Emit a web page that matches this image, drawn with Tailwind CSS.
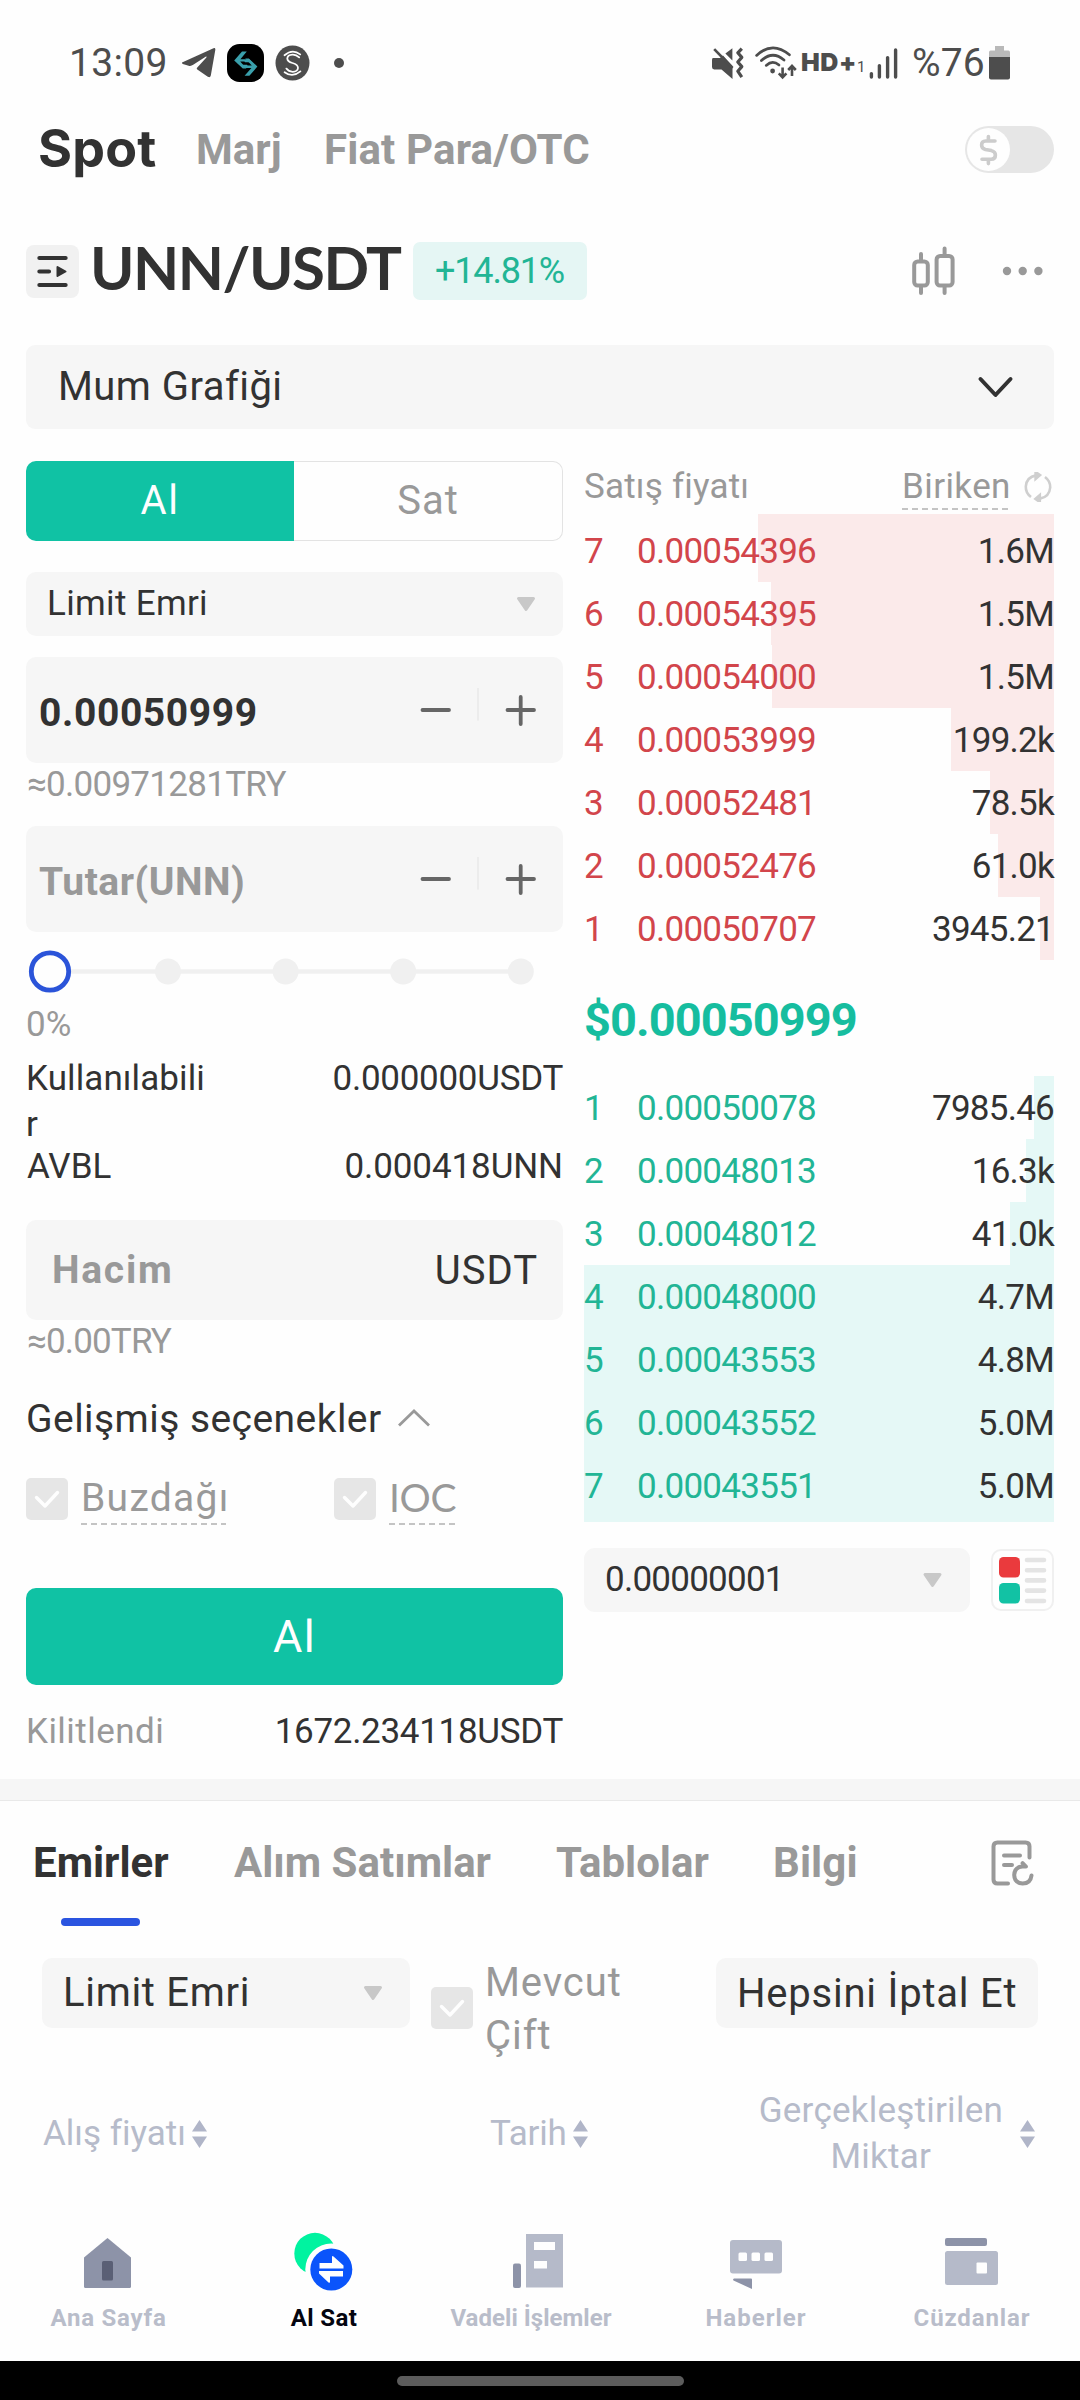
<!DOCTYPE html>
<html lang="tr">
<head>
<meta charset="utf-8">
<title>UNN/USDT Spot</title>
<script src="https://cdn.jsdelivr.net/npm/@tailwindcss/browser@4"></script>
</head>
<body class="w-[1080px] h-[2400px] overflow-hidden flex flex-col bg-[#fefefe] text-[#323232] [font-family:Roboto,sans-serif] whitespace-nowrap">

<!-- Status bar -->
<header class="h-[126px] shrink-0 flex items-center justify-between pl-[69px] pr-[70px] text-[#4d4d4d]">
  <div class="flex items-center">
    <span class="text-[39px] tracking-[0.340px] w-[113px]">13:09</span>
    <svg class="w-[34px] h-[32px]" viewBox="0 0 34 32" fill="#4d4d4d"><path d="M0 15.5 L31.5 1.2 Q33.6 .6 33.3 3 L28.8 28.6 Q28.2 31.2 25.8 29.8 L15.3 22.6 Q14.2 21.6 15.3 20.4 L24.4 10.4 Q25 9.2 23.6 9.8 L11.2 17.8 Q9 19.4 6.6 18.7 L.8 16.9 Q-.6 16.2 0 15.5Z"/></svg>
    <svg class="ml-[11px] w-[37px] h-[38px]" viewBox="0 0 37 38"><rect width="37" height="38" rx="12.5" fill="#000"/><g fill="#3aa0ac"><path d="M15 7.5h4.8L13.4 15.2h8.8l2.6 3H18l-.6-.6H13.2L19.4 24.6H15.8L7.2 16.6Z"/><path d="M22.4 31.8h-4.8L24.4 24h-8.6l-2.8-3.2h7l.6.6h4.2L18.2 14.4h3.6L30.4 22.6Z"/></g></svg>
    <svg class="ml-[11px] w-[35px] h-[36px]" viewBox="0 0 35 36"><ellipse cx="17.5" cy="18" rx="17" ry="17.6" fill="#4d4d4d"/><g fill="none" stroke="#fefefe" stroke-width="1.8" stroke-linecap="round"><path d="M9.5 10.2Q17.5 3.4 25.2 9.4"/><path d="M24.2 12.4Q21 9.4 17.5 9.6Q12.5 9.8 12.3 13.4Q12.3 16.4 17.5 18Q23 19.4 23 23Q22.6 26.6 17.7 26.8Q13.6 26.8 11.4 23.6"/><path d="M25.4 26.4Q17.5 33 9.6 27.2"/></g></svg>
    <span class="ml-[24px] size-[10px] rounded-full bg-[#4d4d4d]"></span>
  </div>
  <div class="flex items-center">
    <svg class="w-[32px] h-[34px]" viewBox="0 0 32 34"><path d="M1 12h7l3-2.4L20.5 20v13L9.5 23.4H2.2Q0 23.4 0 21V14Q0 12 1 12Z" fill="#4d4d4d"/><path d="M13.4 7.6 20.4 2.2V14.6Z" fill="#4d4d4d"/><path d="M2.2 3.2 20.6 22" stroke="#4d4d4d" stroke-width="2.6"/><path d="M29.8 2.6 25.8 6.8 29.8 11.4 25.8 16 29.8 20.6 25.8 25.2 29.8 31.2" fill="none" stroke="#4d4d4d" stroke-width="3.2" stroke-linejoin="round"/></svg>
    <svg class="ml-[11px] w-[42px] h-[34px]" viewBox="0 0 42 34"><g fill="none" stroke="#4d4d4d" stroke-width="2.7" stroke-linecap="round"><path d="M1.6 9.4Q17.4-5.4 34.4 8.8"/><path d="M6.4 14.6Q17.6 4.2 29 14"/><path d="M11.2 19.4Q17.6 13.6 24 19"/></g><circle cx="17.6" cy="25" r="2.4" fill="#4d4d4d"/><g stroke="#4d4d4d" stroke-width="2.6" fill="none"><path d="M27.6 21.4V31M23.8 27.4l3.8 4 3.8-4"/><path d="M37 30V20M33.2 24l3.8-4 3.8 4"/></g></svg>
    <span class="ml-[4px] text-[25px] font-black tracking-[0.6px] w-[56px] [font-family:Inter,sans-serif]">HD+</span>
    <span class="text-[15px] leading-none mt-[8px] w-[12px]">1</span>
    <svg class="w-[29px] h-[31px]" viewBox="0 0 29 31" stroke="#4d4d4d" stroke-width="3.4" stroke-linecap="round"><path d="M2.4 25.6V29M10.4 17.6V29M18.6 9.6V29M26.6 2V29"/></svg>
    <span class="ml-[14px] text-[39px] tracking-[0.120px] w-[77px]">%76</span>
    <svg class="w-[21px] h-[34px]" viewBox="0 0 21 34"><path d="M6 0h9v4.6h4.400Q21 4.600 21 6.400V12H0V6.400Q0 4.600 1.600 4.600H6Z" fill="#b9b9b9"/><path d="M0 11h21v20.400q0 2-2 2H2q-2 0-2-2Z" fill="#4d4d4d"/></svg>
  </div>
</header>

<!-- Market tabs -->
<nav class="h-[47px] shrink-0 flex items-center pl-[38px] pr-[26px] font-bold text-[42px] text-[#999]">
  <span class="text-[52px] tracking-[0.200px] text-[#323232] w-[158px] pb-[2px] [font-family:Inter,sans-serif]">Spot</span>
  <span class="tracking-[0.040px] w-[128px]">Marj</span>
  <span class="tracking-[0.150px]">Fiat Para/OTC</span>
  <div class="ml-auto w-[89px] h-[47px] rounded-full bg-[#e6e6e6] p-[2px] flex items-center">
    <span class="size-[43px] rounded-full bg-[#fefefe] flex items-center justify-center">
      <svg class="w-[19px] h-[32px]" viewBox="0 0 19 32" fill="none" stroke="#ccc" stroke-width="3.6" stroke-linecap="round" stroke-linejoin="round"><path d="M16 7H6.6Q2.6 7 2.6 11Q2.6 14.4 6.4 15.4L12.4 16.6Q16.4 17.8 16.4 21Q16.4 25.2 12.2 25.2H3M9.4 2.6V6M9.4 26V29.6"/></svg>
    </span>
  </div>
</nav>

<!-- Pair header -->
<section class="mt-[69px] h-[58px] shrink-0 flex items-center pl-[26px]">
  <span class="w-[53px] h-[53px] rounded-[8px] bg-[#f1f1f1] flex items-center justify-center">
    <svg class="w-[31px] h-[33px]" viewBox="0 0 31 33" stroke="#323232" stroke-width="4.2" stroke-linecap="round"><path d="M2.4 3H28.6M2.4 30H28.6M2.4 16.5H12"/><path d="M20.5 12 28.5 16.5 20.5 21Z" fill="#323232" stroke-width="2" stroke-linejoin="round"/></svg>
  </span>
  <h1 class="ml-[11px] w-[323px] text-[60px] leading-[58px] font-bold tracking-[-1.5px] pb-[8px] [font-family:Lato,sans-serif]">UNN/USDT</h1>
  <span class="w-[174px] h-[58px] rounded-[7px] bg-[#e5f6f4] text-[#22b595] pl-[22px] text-[36px] leading-[58px] tracking-[-1.170px]">+14.81%</span>
  <svg class="ml-[325px] w-[43px] h-[50px]" viewBox="0 0 43 50" fill="none" stroke="#999" stroke-width="4" stroke-linecap="round"><rect x="2.2" y="15.5" width="13.6" height="24" rx="3.5"/><path d="M9 8V14M9 41V47"/><rect x="24.6" y="10" width="16" height="29.500" rx="3.500"/><path d="M32.600 2.500V8M32.600 41V47"/></svg>
  <svg class="ml-[47px] w-[42px] h-[10px]" viewBox="0 0 42 10" fill="#999"><circle cx="5" cy="5" r="4.2"/><circle cx="20.700" cy="5" r="4.2"/><circle cx="36.400" cy="5" r="4.2"/></svg>
</section>

<!-- Chart toggle -->
<section class="mt-[45px] mx-[26px] h-[84px] shrink-0 rounded-[9px] bg-[#f6f6f6] flex items-center justify-between pl-[32px] pr-[40px]">
  <span class="text-[40px] tracking-[0.450px]">Mum Grafiği</span>
  <svg class="w-[37px] h-[24px]" viewBox="0 0 37 24" fill="none" stroke="#323232" stroke-width="4" stroke-linecap="round" stroke-linejoin="round"><path d="M3.500 4 18.500 20 33.500 4"/></svg>
</section>

<main class="mt-[32px] h-[1318px] shrink-0 flex pl-[26px] pr-[26px]">
  <!-- Order form -->
  <section class="w-[537px] shrink-0 flex flex-col">
    <div class="h-[80px] shrink-0 flex text-[40px] leading-[80px] text-center">
      <span class="w-[268px] rounded-l-[10px] bg-[#10c2a4] text-[#fefefe] tracking-[1.600px]">Al</span>
      <span class="flex-1 rounded-r-[10px] border border-l-0 border-[#e3e3e3] text-[#999] tracking-[0.930px] leading-[78px]">Sat</span>
    </div>

    <div class="mt-[31px] h-[64px] shrink-0 rounded-[10px] bg-[#f6f6f6] flex items-center justify-between pl-[21px] pr-[27px]">
      <span class="text-[35px] tracking-[0.330px]">Limit Emri</span>
      <svg class="w-[20px] h-[16px]" viewBox="0 0 20 16"><path d="M2.500 2.500h15L10 13.500Z" fill="#c8c8c8" stroke="#c8c8c8" stroke-width="3" stroke-linejoin="round"/></svg>
    </div>

    <div class="mt-[21px] h-[106px] shrink-0 rounded-[10px] bg-[#f6f6f6] flex items-center pl-[13px] pr-[27px]">
      <span class="text-[39px] font-bold tracking-[0.610px] pt-[6px]">0.00050999</span>
      <svg class="ml-auto w-[116px] h-[44px]" viewBox="0 0 116 44" stroke="#666" stroke-width="3.8" stroke-linecap="round"><path d="M2.500 22H29M87.500 22H114M100.700 9V36"/><path d="M58 -10V32" stroke="#e9e9e9" stroke-width="1.500"/></svg>
    </div>
    <div class="h-[40px] shrink-0 pl-[1px] text-[35px] leading-[43px] tracking-[-0.710px] text-[#999]">≈0.00971281TRY</div>

    <div class="mt-[23px] h-[106px] shrink-0 rounded-[10px] bg-[#f6f6f6] flex items-center pl-[13px] pr-[27px]">
      <span class="text-[39px] font-bold tracking-[0.520px] pt-[6px] text-[#999]">Tutar(UNN)</span>
      <svg class="ml-auto w-[116px] h-[44px]" viewBox="0 0 116 44" stroke="#666" stroke-width="3.8" stroke-linecap="round"><path d="M2.500 22H29M87.500 22H114M100.700 9V36"/><path d="M58 -10V32" stroke="#e9e9e9" stroke-width="1.500"/></svg>
    </div>

    <div class="h-[71px] shrink-0 pt-[17px] pl-[2px]">
      <svg class="w-[510px] h-[46px]" viewBox="0 0 510 46"><path d="M40 22.500H492" stroke="#f0f0f0" stroke-width="4.500"/><g fill="#f0f0f0"><circle cx="140" cy="22.500" r="13"/><circle cx="257.600" cy="22.500" r="13"/><circle cx="375.200" cy="22.500" r="13"/><circle cx="492.800" cy="22.500" r="13"/></g><circle cx="22" cy="22.500" r="18.700" fill="#fefefe" stroke="#2b54d9" stroke-width="4.800"/></svg>
    </div>
    <div class="h-[40px] shrink-0 text-[35px] leading-[43px] text-[#999]">0%</div>

    <div class="mt-[13px] shrink-0 flex justify-between text-[35px] leading-[46px]">
      <span class="h-[92px] w-[190px] tracking-[0.100px]">Kullanılabili<br>r</span>
      <span class="tracking-[-0.280px]">0.000000USDT</span>
    </div>
    <div class="h-[36px] shrink-0 flex justify-between text-[35px] leading-[38px]">
      <span class="pl-[1px]">AVBL</span>
      <span class="tracking-[-0.100px]">0.000418UNN</span>
    </div>

    <div class="mt-[36px] h-[100px] shrink-0 rounded-[10px] bg-[#f6f6f6] flex items-center justify-between pl-[26px] pr-[25px] pt-[1px]">
      <span class="text-[39px] font-bold tracking-[1.730px] text-[#999]">Hacim</span>
      <span class="text-[40px] tracking-[0.990px]">USDT</span>
    </div>
    <div class="h-[40px] shrink-0 pl-[1px] text-[35px] leading-[43px] tracking-[-0.820px] text-[#999]">≈0.00TRY</div>

    <div class="mt-[34px] h-[48px] shrink-0 flex items-center">
      <span class="text-[39px] leading-[46px] tracking-[0.450px] pt-[1px]">Gelişmiş seçenekler</span>
      <svg class="ml-[15px] w-[34px] h-[20px]" viewBox="0 0 34 20" fill="none" stroke="#999" stroke-width="2.800"><path d="M2 17.500 17 3 32 17.500"/></svg>
    </div>

    <div class="mt-[36px] h-[48px] shrink-0 flex text-[39px] leading-[41px] text-[#999]">
      <span class="size-[42px] rounded-[5px] bg-[#e6e6e6] flex items-center justify-center"><svg class="w-[26px] h-[19px]" viewBox="0 0 26 19" fill="none" stroke="#fefefe" stroke-width="3.400" stroke-linecap="round" stroke-linejoin="round"><path d="M2.500 7.500 11 16 23.500 2.500"/></svg></span>
      <div class="ml-[13px] w-[145px]"><div class="h-[45px] tracking-[1.300px]">Buzdağı</div><div class="h-[2px] bg-[repeating-linear-gradient(90deg,#c4c4c4_0_6px,transparent_6px_10px)]"></div></div>
      <span class="ml-[108px] size-[42px] rounded-[5px] bg-[#e6e6e6] flex items-center justify-center"><svg class="w-[26px] h-[19px]" viewBox="0 0 26 19" fill="none" stroke="#fefefe" stroke-width="3.400" stroke-linecap="round" stroke-linejoin="round"><path d="M2.500 7.500 11 16 23.500 2.500"/></svg></span>
      <div class="ml-[13px] w-[66px]"><div class="h-[45px] leading-[39px] tracking-[-0.340px] [font-family:Lato,sans-serif]">IOC</div><div class="h-[2px] bg-[repeating-linear-gradient(90deg,#c4c4c4_0_6px,transparent_6px_10px)]"></div></div>
    </div>

    <button class="mt-[62px] h-[97px] shrink-0 rounded-[10px] bg-[#10c2a4] text-[#fefefe] text-[45px] leading-[97px] tracking-[1.400px]">Al</button>
    <div class="mt-[26px] h-[40px] shrink-0 flex justify-between text-[35px] leading-[42px]">
      <span class="tracking-[0.450px] text-[#999]">Kilitlendi</span>
      <span class="tracking-[-0.300px]">1672.234118USDT</span>
    </div>
  </section>

  <!-- Order book -->
  <section class="ml-[21px] w-[470px] shrink-0 flex flex-col">
    <div class="h-[53px] shrink-0 flex text-[35px] leading-[51px] text-[#999]">
      <span class="tracking-[0.200px]">Satış fiyatı</span>
      <div class="ml-auto w-[106px]"><div class="h-[47px] tracking-[0.410px]">Biriken</div><div class="h-[2px] bg-[repeating-linear-gradient(90deg,#c4c4c4_0_6px,transparent_6px_10px)]"></div></div>
      <svg class="ml-[16px] mr-[2px] mt-[11px] w-[28px] h-[30px]" viewBox="0 0 28 30" fill="none" stroke="#cfcfcf" stroke-width="2.600"><path d="M7 25Q1.600 21 1.800 14.500Q2.600 5 12 3.400"/><path d="M11.600 0 16 3.200 11.600 7Z" fill="#cfcfcf"/><path d="M21 5Q26.400 9 26.200 15.500Q25.400 25 16 26.600"/><path d="M15.800 30 11.400 26.800 15.800 23Z" fill="#cfcfcf"/></svg>
    </div>
    <div id="asks" class="shrink-0 text-[#d2454b]"></div>
    <div class="h-[116px] shrink-0 text-[47px] leading-[120px] font-bold tracking-[-0.950px] text-[#16bd9f]">$0.00050999</div>
    <div id="bids" class="shrink-0 text-[#22b595]"></div>
    <div class="mt-[26px] h-[64px] shrink-0 flex items-center justify-between">
      <div class="w-[386px] h-[64px] rounded-[11px] bg-[#f6f6f6] flex items-center justify-between pl-[21px] pr-[27px]">
        <span class="text-[35px] tracking-[-0.750px] pt-[1px]">0.00000001</span>
        <svg class="w-[21px] h-[16px]" viewBox="0 0 20 16"><path d="M2.500 2.500h15L10 13.500Z" fill="#c8c8c8" stroke="#c8c8c8" stroke-width="3" stroke-linejoin="round"/></svg>
      </div>
      <svg class="w-[63px] h-[62px]" viewBox="0 0 63 62"><rect x="1" y="1" width="61" height="60" rx="9" fill="#fefefe" stroke="#f0f0f0" stroke-width="2"/><rect x="8" y="8" width="21" height="20.500" rx="4.500" fill="#ea3a3d"/><rect x="8" y="34" width="21" height="20.500" rx="4.500" fill="#12c2a4"/><path d="M36 11H53M36 21.200H53M36 31.400H53M36 41.600H53M36 52H53" stroke="#e4e4e4" stroke-width="4.600" stroke-linecap="round"/></svg>
    </div>
  </section>
</main>

<!-- Orders -->
<div class="h-[22px] shrink-0 bg-[#f6f6f6] border-b border-[#e9e9e9]"></div>
<section class="h-[125px] shrink-0 flex flex-col">
  <div class="h-[117px] flex items-center pl-[33px] pr-[46px] pt-[6px] font-bold text-[42px] text-[#999]">
    <span class="w-[201px] text-[#323232]">Emirler</span>
    <span class="w-[322px]">Alım Satımlar</span>
    <span class="w-[217px]">Tablolar</span>
    <span class="tracking-[0.100px]">Bilgi</span>
    <svg class="ml-auto w-[43px] h-[46px]" viewBox="0 0 43 46" fill="none" stroke="#999" stroke-width="4" stroke-linecap="round" stroke-linejoin="round"><path d="M17 43.500H6.500Q2.500 43.500 2.500 39.500V6.500Q2.500 2.500 6.500 2.500H34.500Q38.500 2.500 38.500 6.500V17.500M13 15.500H29M13 25H21"/><path d="M40.500 35.500Q39.500 43.500 31.700 43.500Q23.400 43 23.200 35Q23.600 27 31.500 26.600H35L31.600 23.200"/></svg>
  </div>
  <div class="ml-[61px] w-[79px] h-[8px] rounded-full bg-[#2a54e0]"></div>
</section>

<section class="mt-[32px] h-[102px] shrink-0 flex items-start pl-[42px] pr-[42px] text-[40px]">
  <div class="w-[368px] h-[70px] rounded-[10px] bg-[#f6f6f6] flex items-center justify-between pl-[21px] pr-[27px]">
    <span class="tracking-[0.690px]">Limit Emri</span>
    <svg class="w-[20px] h-[16px]" viewBox="0 0 20 16"><path d="M2.500 2.500h15L10 13.500Z" fill="#c8c8c8" stroke="#c8c8c8" stroke-width="3" stroke-linejoin="round"/></svg>
  </div>
  <span class="ml-[21px] mt-[29px] size-[42px] rounded-[5px] bg-[#e6e6e6] flex items-center justify-center"><svg class="w-[26px] h-[19px]" viewBox="0 0 26 19" fill="none" stroke="#fefefe" stroke-width="3.400" stroke-linecap="round" stroke-linejoin="round"><path d="M2.500 7.500 11 16 23.500 2.500"/></svg></span>
  <span class="ml-[12px] -mt-[2px] leading-[53px] tracking-[0.950px] text-[#999]">Mevcut<br>Çift</span>
  <div class="ml-auto w-[322px] h-[70px] rounded-[10px] bg-[#f6f6f6] pl-[21px] leading-[71px] tracking-[0.780px]">Hepsini İptal Et</div>
</section>

<section class="mt-[28px] h-[92px] shrink-0 flex items-center pl-[43px] pr-[45px] text-[35px] leading-[46px] text-[#b6bbca]">
  <span>Alış fiyatı</span>
  <svg class="ml-[6px] w-[15px] h-[28px]" viewBox="0 0 15 28" fill="#b0b5c8"><path d="M7.500 0 15 11.500H0ZM0 16.500H15L7.500 28Z"/></svg>
  <span class="ml-[283px] tracking-[-0.190px]">Tarih</span>
  <svg class="ml-[6px] w-[15px] h-[28px]" viewBox="0 0 15 28" fill="#b0b5c8"><path d="M7.500 0 15 11.500H0ZM0 16.500H15L7.500 28Z"/></svg>
  <span class="ml-auto text-center tracking-[0.240px]">Gerçekleştirilen<br>Miktar</span>
  <svg class="ml-[17px] w-[15px] h-[28px]" viewBox="0 0 15 28" fill="#b0b5c8"><path d="M7.500 0 15 11.500H0ZM0 16.500H15L7.500 28Z"/></svg>
</section>

<!-- Bottom navigation -->
<nav class="h-[181px] shrink-0 pt-[50px] grid grid-cols-5 text-center text-[24px] leading-[29px] font-bold text-[#b9bdca]">
  <div class="flex flex-col items-center gap-[10px]">
    <svg class="w-[64px] h-[64px]" viewBox="0 0 64 64"><path d="M31.500 8 55 27.500V56.500Q55 58 53.500 58H9.500Q8 58 8 56.500V27.500Z" fill="#8d93a8"/><rect x="26" y="31" width="11" height="19.500" rx="1.500" fill="#5a5f75"/></svg>
    <span class="tracking-[0.790px] pl-[1px]">Ana Sayfa</span>
  </div>
  <div class="flex flex-col items-center gap-[10px] text-[#04050f]">
    <svg class="w-[64px] h-[64px]" viewBox="0 0 64 64"><circle cx="23" cy="23.500" r="20.700" fill="#00f3a0"/><circle cx="39.300" cy="39.500" r="26" fill="#fefefe"/><circle cx="39.300" cy="39.500" r="21" fill="#0a54fb"/><path d="M27.500 33H40V26.500Q40.500 25.500 41.500 26.500L51.500 35.500V38.500H27.500ZM51 41H27V43.500L36.500 52.500Q38 53 38 52V46.500H51Z" fill="#fefefe"/></svg>
    <span class="tracking-[0.410px]">Al Sat</span>
  </div>
  <div class="flex flex-col items-center gap-[10px]">
    <svg class="w-[64px] h-[64px]" viewBox="0 0 64 64"><rect x="5" y="33.500" width="8" height="24.500" rx="2" fill="#8d93a8"/><path d="M18 4H55V57.500H18ZM26 12V20H47V12ZM26 31V38.500H39V31Z" fill="#b5bac9" fill-rule="evenodd"/></svg>
    <span class="tracking-[0.030px] pr-[18px] leading-[28px]">Vadeli İşlemler</span>
  </div>
  <div class="flex flex-col items-center gap-[10px]">
    <svg class="w-[64px] h-[64px]" viewBox="0 0 64 64"><rect x="6" y="10" width="52" height="33.500" rx="3" fill="#b5bac9"/><g fill="#fefefe"><rect x="14.500" y="22.500" width="8.500" height="8.500" rx="1.500"/><rect x="27.500" y="22.500" width="8.500" height="8.500" rx="1.500"/><rect x="40.500" y="22.500" width="8.500" height="8.500" rx="1.500"/></g><path d="M10 48.500H27Q28 48.500 28 49.500V59L9.500 50.500Q8.500 49 10 48.500Z" fill="#8d93a8"/></svg>
    <span class="tracking-[1px]">Haberler</span>
  </div>
  <div class="flex flex-col items-center gap-[10px]">
    <svg class="w-[64px] h-[64px]" viewBox="0 0 64 64"><rect x="5" y="8" width="42" height="8" rx="2" fill="#8d93a8"/><rect x="5" y="21" width="53" height="34" rx="2.500" fill="#b5bac9"/><rect x="36.500" y="32.500" width="10.500" height="11" rx="1" fill="#fefefe"/></svg>
    <span class="tracking-[0.870px]">Cüzdanlar</span>
  </div>
</nav>
<footer class="h-[39px] shrink-0 bg-black flex justify-center pt-[15px]">
  <span class="w-[287px] h-[10px] rounded-full bg-[#5c5c5c]"></span>
</footer>

<script>
const asks = [
  [7, '0.00054396', '1.6M', 296], [6, '0.00054395', '1.5M', 283], [5, '0.00054000', '1.5M', 282],
  [4, '0.00053999', '199.2k', 103], [3, '0.00052481', '78.5k', 64], [2, '0.00052476', '61.0k', 56], [1, '0.00050707', '3945.21', 14]
];
const bids = [
  [1, '0.00050078', '7985.46', 20], [2, '0.00048013', '16.3k', 28], [3, '0.00048012', '41.0k', 44],
  [4, '0.00048000', '4.7M', 470], [5, '0.00043553', '4.8M', 470], [6, '0.00043552', '5.0M', 470], [7, '0.00043551', '5.0M', 470]
];
function row([n, price, amount, depth], size, bar) {
  return `<div class="relative ${size} flex items-center text-[35px] leading-[60px]">
    <div class="absolute right-0 inset-y-0 ${bar}" style="width:${depth}px"></div>
    <span class="relative w-[53px]">${n}</span>
    <span class="relative tracking-[-0.720px]">${price}</span>
    <span class="relative ml-auto tracking-[-0.750px] text-[#323232]">${amount}</span>
  </div>`;
}
document.getElementById('asks').innerHTML = asks.map((r, i) => row(r, i === 0 ? 'h-[68px] pt-[8px]' : 'h-[63px] pt-[3px]', 'bg-[#fbeaea]')).join('');
document.getElementById('bids').innerHTML = bids.map((r, i) => row(r, i === 6 ? 'h-[68px] pt-[3px] pb-[5px]' : 'h-[63px] pt-[3px]', 'bg-[#e5f8f6]')).join('');
</script>
</body>
</html>
